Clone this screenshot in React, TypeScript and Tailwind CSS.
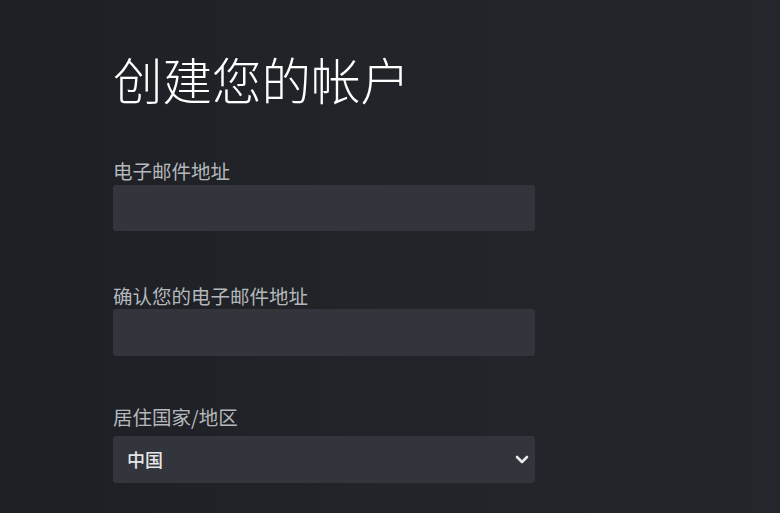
import React from "react";

const font = { fontFamily: '"Noto Sans CJK SC", "Noto Sans", sans-serif' };

export default function App() {
  return (
    <div
      className="w-[780px] h-[513px] overflow-hidden bg-[linear-gradient(90deg,#1d1f24_0%,#212429_50%,#23262b_100%)]"
      style={font}
    >
      <div className="flex flex-col pl-[113px] pt-[54px] w-[535px]">
        <h1 className="text-[49.5px] leading-none font-light text-white">创建您的帐户</h1>

        <label className="mt-[57px] text-[19.5px] leading-[19.5px] text-[#b4b7bb]">电子邮件地址</label>
        <div className="mt-[5px] h-[46px] w-[422px] rounded-[3px] bg-[#32353c]" />

        <label className="mt-[55px] text-[19.5px] leading-[19.5px] text-[#b4b7bb]">确认您的电子邮件地址</label>
        <div className="mt-[3px] h-[47px] w-[422px] rounded-[3px] bg-[#32353c]" />

        <label className="mt-[51px] text-[19.5px] leading-[19.5px] text-[#b4b7bb]">居住国家/地区</label>
        <div className="mt-[10px] h-[47px] w-[422px] rounded-[3px] bg-[#32353c] flex items-center justify-between pl-[14px] pr-[6px]">
          <span className="text-[18px] font-medium text-[#e6e6e6]">中国</span>
          <svg width="14" height="9" viewBox="0 0 14 9">
            <polyline points="2,2 7,7 12,2" fill="none" stroke="#e8e8e8" strokeWidth="2.6" strokeLinecap="round" strokeLinejoin="round" />
          </svg>
        </div>
      </div>
    </div>
  );
}
